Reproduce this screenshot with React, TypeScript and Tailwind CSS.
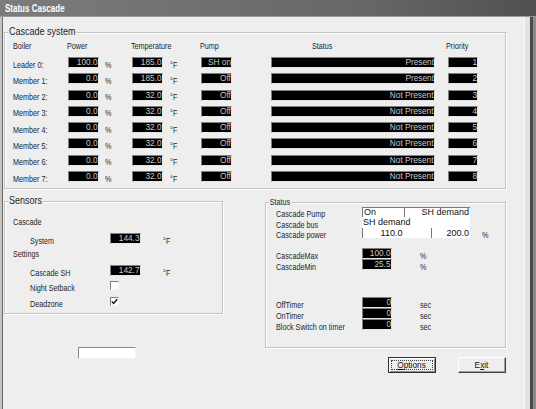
import React from 'react';

const members = [
  { name: 'Leader 0:', power: '100.0', temp: '185.0', pump: 'SH on', status: 'Present' },
  { name: 'Member 1:', power: '0.0', temp: '185.0', pump: 'Off', status: 'Present' },
  { name: 'Member 2:', power: '0.0', temp: '32.0', pump: 'Off', status: 'Not Present' },
  { name: 'Member 3:', power: '0.0', temp: '32.0', pump: 'Off', status: 'Not Present' },
  { name: 'Member 4:', power: '0.0', temp: '32.0', pump: 'Off', status: 'Not Present' },
  { name: 'Member 5:', power: '0.0', temp: '32.0', pump: 'Off', status: 'Not Present' },
  { name: 'Member 6:', power: '0.0', temp: '32.0', pump: 'Off', status: 'Not Present' },
  { name: 'Member 7:', power: '0.0', temp: '32.0', pump: 'Off', status: 'Not Present' },
];

function Lbl({ children, className = '' }: { children: React.ReactNode; className?: string }) {
  return (
    <span className={`inline-block origin-left scale-x-[0.8] whitespace-nowrap text-[9px] leading-[10px] text-[#1e1e1e] ${className}`}>
      {children}
    </span>
  );
}

function Dark({ v, w }: { v: string; w: string }) {
  return (
    <div className={`flex h-[11px] shrink-0 items-center justify-end overflow-hidden border border-b-[#e4e4e4] border-l-[#808080] border-r-[#e4e4e4] border-t-[#808080] bg-black ${w}`}>
      <span className="inline-block origin-right scale-x-[0.92] whitespace-nowrap text-[9px] leading-none text-[#c8c8c8]">{v}</span>
    </div>
  );
}

function Group({ label, small, className, children }: { label: string; small?: boolean; className: string; children: React.ReactNode }) {
  return (
    <div className={`relative shrink-0 border border-[#c3c3c3] shadow-[1px_1px_0_#fff,inset_1px_1px_0_#fff] ${className}`}>
      <span
        className={`absolute left-[3px] inline-block origin-left whitespace-nowrap bg-[#eeeeee] px-[1px] text-[#1e1e1e] ${
          small ? 'top-[-6px] scale-x-[0.8] text-[9px] leading-[10px]' : 'top-[-7px] scale-x-[0.9] text-[10px] leading-[12px]'
        }`}
      >
        {label}
      </span>
      {children}
    </div>
  );
}

function Check({ on }: { on?: boolean }) {
  return (
    <div className="flex h-[9px] w-[9px] items-center justify-center border border-b-[#f4f4f4] border-l-[#808080] border-r-[#f4f4f4] border-t-[#808080] bg-white">
      {on && (
        <svg width="7" height="7" viewBox="0 0 7 7">
          <polyline points="0.8,3.4 2.6,5.4 6.2,1.2" fill="none" stroke="#111" strokeWidth="1.4" />
        </svg>
      )}
    </div>
  );
}

function Val({ children }: { children: React.ReactNode }) {
  return <span className="inline-block whitespace-nowrap text-[9px] leading-none text-[#111]">{children}</span>;
}

export default function App() {
  return (
    <div className="flex h-[409px] w-[536px] flex-col overflow-hidden bg-[#eeeeee] font-['Liberation_Sans',Arial,sans-serif]">
      {/* title bar */}
      <div className="flex h-[17px] shrink-0 items-center bg-[linear-gradient(to_right,#7c7c7c,#666_70%,#505050)] pl-[5px] shadow-[inset_0_-1px_0_#9a9a9a]">
        <span className="inline-block origin-left scale-x-[0.8] whitespace-nowrap text-[10px] font-bold leading-none text-white">Status Cascade</span>
      </div>

      <div className="flex flex-1">
        <div className="w-[3px] shrink-0 border-l-2 border-r border-l-[#c4c4c4] border-r-[#6a6a6a]" />

        <div className="w-[521px] shrink-0">
          {/* Cascade system */}
          <Group label="Cascade system" className="ml-[1px] mt-[15px] h-[157px] w-[502px]">
            <div className="mt-[6px] flex h-[10px] items-center pl-[8px]">
              <div className="w-[54px]"><Lbl>Boiler</Lbl></div>
              <div className="w-[64px]"><Lbl>Power</Lbl></div>
              <div className="w-[69px]"><Lbl>Temperature</Lbl></div>
              <div className="w-[112px]"><Lbl>Pump</Lbl></div>
              <div className="w-[134px]"><Lbl>Status</Lbl></div>
              <div><Lbl>Priority</Lbl></div>
            </div>
            <div className="mt-[8px] flex flex-col gap-[5.3px]">
              {members.map((m, i) => (
                <div key={m.name} className="flex h-[11px] items-center pl-[8px]">
                  <div className="w-[55px]"><Lbl>{m.name}</Lbl></div>
                  <Dark v={m.power} w="w-[31px]" />
                  <div className="w-[6px]" />
                  <div className="w-[27px]"><Lbl>%</Lbl></div>
                  <Dark v={m.temp} w="w-[31px]" />
                  <div className="w-[7px]" />
                  <div className="w-[31px]"><Lbl>°F</Lbl></div>
                  <Dark v={m.pump} w="w-[31px]" />
                  <div className="w-[39px]" />
                  <Dark v={m.status} w="w-[164px]" />
                  <div className="w-[13px]" />
                  <Dark v={String(i + 1)} w="w-[30px]" />
                </div>
              ))}
            </div>
          </Group>

          <div className="flex">
            {/* left column */}
            <div className="flex flex-col">
              <Group label="Sensors" className="ml-[1px] mt-[12px] h-[113px] w-[219px]">
                <div className="mt-[15px] flex h-[10px] items-center pl-[8px]"><Lbl>Cascade</Lbl></div>
                <div className="mt-[6px] flex h-[11px] items-center pl-[25px]">
                  <div className="w-[80px]"><Lbl>System</Lbl></div>
                  <Dark v="144.3" w="w-[31px]" />
                  <div className="ml-[22px]"><Lbl>°F</Lbl></div>
                </div>
                <div className="mt-[5px] flex h-[10px] items-center pl-[8px]"><Lbl>Settings</Lbl></div>
                <div className="mt-[6px] flex h-[11px] items-center pl-[25px]">
                  <div className="w-[80px]"><Lbl>Cascade SH</Lbl></div>
                  <Dark v="142.7" w="w-[31px]" />
                  <div className="ml-[22px]"><Lbl>°F</Lbl></div>
                </div>
                <div className="mt-[5px] flex h-[9px] items-center pl-[25px]">
                  <div className="w-[80px]"><Lbl>Night Setback</Lbl></div>
                  <Check />
                </div>
                <div className="mt-[7px] flex h-[9px] items-center pl-[25px]">
                  <div className="w-[80px]"><Lbl>Deadzone</Lbl></div>
                  <Check on />
                </div>
              </Group>
              <div className="ml-[75px] mt-[33px] h-[12px] w-[58px] border border-b-[#f4f4f4] border-l-[#8a8a8a] border-r-[#f4f4f4] border-t-[#8a8a8a] bg-white" />
            </div>

            {/* right column */}
            <div className="ml-[42px] flex flex-col">
              <Group label="Status" small className="mt-[13px] h-[146px] w-[241px]">
                <div className="mt-[4px] flex h-[10px] items-center pl-[10px]">
                  <div className="w-[86px]"><Lbl>Cascade Pump</Lbl></div>
                  <div className="flex h-[10px] w-[42px] items-center border-l border-t border-[#7a7a7a] bg-white pl-[1px]">
                    <Val>On</Val>
                  </div>
                  <div className="flex h-[10px] w-[66px] items-center justify-end border-l border-t border-[#7a7a7a] bg-white pr-[1px]">
                    <Val>SH demand</Val>
                  </div>
                </div>
                <div className="flex h-[11px] items-center pl-[10px]">
                  <div className="w-[86px]"><Lbl>Cascade bus</Lbl></div>
                  <div className="flex h-[11px] w-[108px] items-center bg-white pl-[1px]">
                    <Val>SH demand</Val>
                  </div>
                </div>
                <div className="flex h-[10px] items-center pl-[10px]">
                  <div className="w-[86px]"><Lbl>Cascade power</Lbl></div>
                  <div className="flex h-[10px] w-[108px] bg-white">
                    <div className="flex w-[58px] items-center justify-center border-l border-[#7a7a7a]">
                      <Val>110.0</Val>
                    </div>
                    <div className="ml-[11px] flex w-[39px] items-center justify-end border-l border-[#7a7a7a] pr-[1px]">
                      <Val>200.0</Val>
                    </div>
                  </div>
                  <div className="ml-[12px]"><Lbl>%</Lbl></div>
                </div>

                <div className="mt-[10px] flex flex-col">
                  {[
                    ['CascadeMax', '100.0'],
                    ['CascadeMin', '25.5'],
                  ].map(([l, v]) => (
                    <div key={l} className="flex h-[11px] items-center pl-[10px]">
                      <div className="w-[86px]"><Lbl>{l}</Lbl></div>
                      <Dark v={v} w="w-[30px]" />
                      <div className="ml-[28px]"><Lbl>%</Lbl></div>
                    </div>
                  ))}
                </div>

                <div className="mt-[27px] flex flex-col">
                  {['OffTimer', 'OnTimer', 'Block Switch on timer'].map((l) => (
                    <div key={l} className="flex h-[11px] items-center pl-[10px]">
                      <div className="w-[86px]"><Lbl>{l}</Lbl></div>
                      <Dark v="0" w="w-[30px]" />
                      <div className="ml-[28px]"><Lbl>sec</Lbl></div>
                    </div>
                  ))}
                </div>
              </Group>

              <div className="mt-[9px] flex">
                <div className="ml-[123px] flex h-[16px] w-[48px] border border-[#303030] bg-[#eeeeee] shadow-[inset_1px_1px_0_#fff,inset_-1px_-1px_0_#8a8a8a]">
                  <div className="m-[2px] flex flex-1 items-center justify-center border border-dotted border-[#444]">
                    <span className="inline-block scale-x-[0.92] whitespace-nowrap text-[9px] leading-none text-[#111]">
                      <span className="underline">O</span>ptions
                    </span>
                  </div>
                </div>
                <div className="ml-[22px] flex h-[16px] w-[48px] items-center justify-center border border-b-[#404040] border-l-white border-r-[#404040] border-t-white bg-[#eeeeee] shadow-[inset_-1px_-1px_0_#a0a0a0]">
                  <span className="inline-block scale-x-[0.92] whitespace-nowrap text-[9px] leading-none text-[#111]">
                    E<span className="underline">x</span>it
                  </span>
                </div>
              </div>
            </div>
          </div>
        </div>

        {/* right window frame */}
        <div className="flex w-[12px] shrink-0">
          <div className="w-[1px] bg-[#fafafa]" />
          <div className="w-[5px] bg-[#e2e2e2]" />
          <div className="w-[3px] bg-[#4c4c4c]" />
          <div className="w-[3px] bg-[#8c8c8c]" />
        </div>
      </div>
    </div>
  );
}
